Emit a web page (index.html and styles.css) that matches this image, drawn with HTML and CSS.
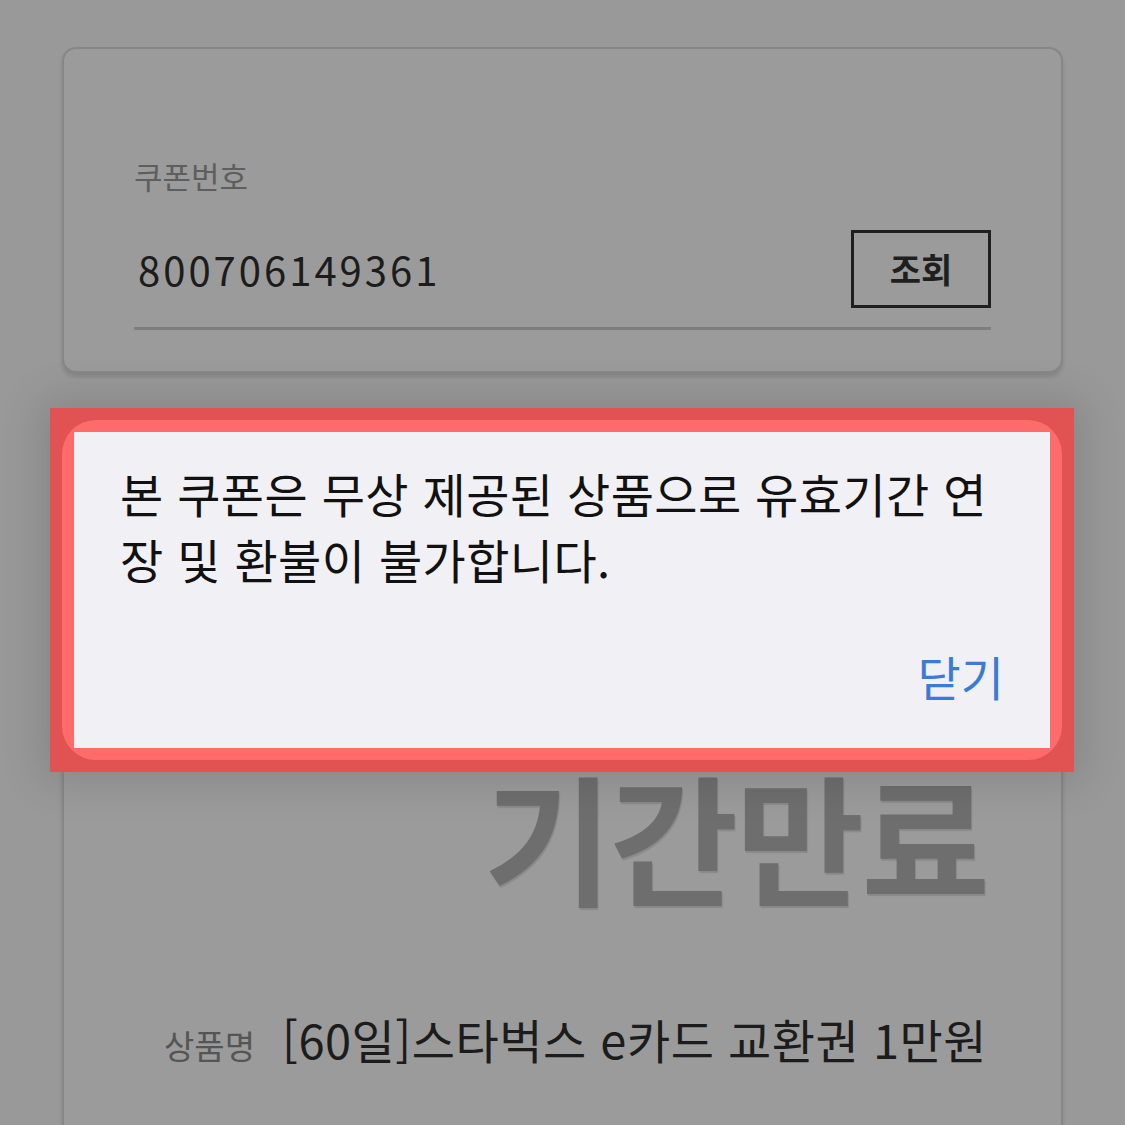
FILE: index.html
```html
<!DOCTYPE html>
<html lang="ko">
<head>
<meta charset="UTF-8">
<title>쿠폰 조회</title>
<link rel="stylesheet" href="styles.css">
</head>
<body>

<div class="page">
  <!-- 쿠폰번호 입력 -->
  <div class="card search">
    <div class="label">쿠폰번호</div>
    <div class="field">
      <span class="num">800706149361</span>
      <button class="btn">조회</button>
    </div>
  </div>

  <!-- 쿠폰 정보 -->
  <div class="card info">
    <div class="stamp">기간만료</div>
    <div class="row">
      <span class="key">상품명</span>
      <span class="val">[60일]스타벅스 e카드 교환권 1만원</span>
    </div>
    <div class="row">
      <span class="key">교환처</span>
      <span class="val">스타벅스</span>
    </div>
  </div>
</div>

<!-- 알림 -->
<div class="mark">
  <div class="ring">
    <div class="dialog">
      <p class="msg">본 쿠폰은 무상 제공된 상품으로 유효기간 연장 및 환불이 불가합니다.</p>
      <div class="foot"><button class="close">닫기</button></div>
    </div>
  </div>
</div>

</body>
</html>
```

FILE: styles.css
```css
*{box-sizing:border-box}
body{
  margin:0;background:#999;
  font-family:"Noto Sans CJK KR","Noto Sans",sans-serif;
  overflow:hidden;height:1125px}
.page{padding:47px 62px 0}
.card{
  background:#9b9b9b;border:2px solid #878787;border-radius:14px;
  box-shadow:0 4px 4px rgba(0,0,0,.12)}
.search{height:326px;padding:102px 70px 0}
.label{font-size:31px;color:#5e5e5e;line-height:50px}
.field{
  display:flex;align-items:center;justify-content:space-between;
  height:122px;margin-top:7px;border-bottom:3px solid #7e7e7e;padding:20px 0 18px}
.num{font-size:40px;color:#1c1c1c;letter-spacing:3px;padding-left:4px}
.btn{
  width:140px;height:78px;background:none;border:3px solid #1f1f1f;
  font:bold 34px "Noto Sans CJK KR",sans-serif;color:#1f1f1f}
.info{margin-top:44px;height:900px;padding:345px 74px 0 0}
.stamp{
  text-align:right;font-size:140px;font-weight:bold;color:#6e6e6e;
  line-height:140px;letter-spacing:-3px;margin-right:0;
  text-shadow:1px 2px 1px rgba(0,0,0,.12)}
.row{display:flex;justify-content:flex-end;align-items:baseline;gap:27px;margin-top:100px}
.row+.row{margin-top:40px}
.key{font-size:33px;color:#555}
.val{font-size:47px;color:#1c1c1c;letter-spacing:.5px}
.mark{
  position:absolute;left:50px;top:408px;width:1024px;height:364px;
  background:#e15252;padding:12px;
  box-shadow:0 0 40px 10px rgba(0,0,0,.12)}
.ring{height:100%;background:#ff6b6b;border-radius:34px;padding:12px}
.dialog{height:100%;background:#f1f0f5;padding:28px 46px 0 46px;display:flex;flex-direction:column}
.msg{margin:0;font-size:47px;line-height:66px;color:#111;letter-spacing:.4px;width:890px}
.foot{margin-top:auto;display:flex;justify-content:flex-end;padding-bottom:38px}
.close{
  background:none;border:none;padding:0;
  font:47px "Noto Sans CJK KR",sans-serif;color:#3a7bd8}
```
